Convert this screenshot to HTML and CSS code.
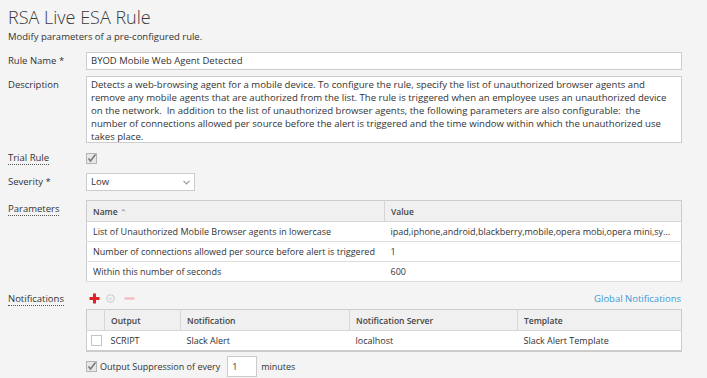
FILE: index.html
```html
<!DOCTYPE html>
<html lang="en">
<head>
    <meta charset="UTF-8">
    <title>RSA Live ESA Rule</title>
    <link rel="stylesheet" href="styles.css">
</head>
<body>
    <div class="page">
        <h1>RSA Live ESA Rule</h1>
        <p class="intro">Modify parameters of a pre-configured rule.</p>

        <div class="row row-name">
            <label>Rule Name *</label>
            <div class="input">BYOD Mobile Web Agent Detected</div>
        </div>

        <div class="row row-desc">
            <label>Description</label>
            <div class="textarea">Detects a web-browsing agent for a mobile device. To configure the rule, specify the list of unauthorized browser agents and remove any mobile agents that are authorized from the list. The rule is triggered when an employee uses an unauthorized device on the network.&nbsp; In addition to the list of unauthorized browser agents, the following parameters are also configurable:&nbsp; the number of connections allowed per source before the alert is triggered and the time window within which the unauthorized use takes place.</div>
        </div>

        <div class="row row-trial">
            <label class="hint">Trial Rule</label>
            <div>
                <svg class="check" width="11" height="11" viewBox="0 0 11 11"><rect x="0.5" y="0.5" width="10" height="10" fill="#e6e6e6" stroke="#b5b5b5"/><path d="M2.5 5.5 L4.5 8 L9.5 1.5" fill="none" stroke="#7a7a7a" stroke-width="1.6"/></svg>
            </div>
        </div>

        <div class="row row-sev">
            <label>Severity *</label>
            <div class="select">Low
                <svg width="7" height="5" viewBox="0 0 7 5"><path d="M0.5 0.8 L3.5 3.8 L6.5 0.8" fill="none" stroke="#999" stroke-width="1.2"/></svg>
            </div>
        </div>

        <div class="row row-params">
            <label class="hint">Parameters</label>
            <table class="grid params">
                <thead>
                    <tr><th class="c-name">Name <span class="sort">&#8963;</span></th><th>Value</th></tr>
                </thead>
                <tbody>
                    <tr><td>List of Unauthorized Mobile Browser agents in lowercase</td><td>ipad,iphone,android,blackberry,mobile,opera mobi,opera mini,sy...</td></tr>
                    <tr><td>Number of connections allowed per source before alert is triggered</td><td>1</td></tr>
                    <tr><td>Within this number of seconds</td><td>600</td></tr>
                </tbody>
            </table>
        </div>

        <div class="row row-notif">
            <label class="hint">Notifications</label>
            <div>
                <div class="toolbar">
                    <svg class="add" width="11" height="11" viewBox="0 0 11 11"><path d="M5.5 0.5 V10.5 M0.5 5.5 H10.5" stroke="#e0212b" stroke-width="3"/></svg>
                    <svg class="menu" width="9" height="9" viewBox="0 0 9 9"><circle cx="4.5" cy="4.5" r="3.8" fill="none" stroke="#c8c8c8"/><path d="M2.8 3.8 L4.5 5.5 L6.2 3.8" fill="none" stroke="#c8c8c8"/></svg>
                    <svg class="remove" width="11" height="11" viewBox="0 0 11 11"><path d="M0.5 5.5 H10.5" stroke="#f2b8bb" stroke-width="2.2"/></svg>
                    <a class="global" href="#">Global Notifications</a>
                </div>
                <table class="grid notif">
                    <thead>
                        <tr><th class="c-chk"></th><th class="c-out">Output</th><th class="c-not">Notification</th><th class="c-srv">Notification Server</th><th>Template</th></tr>
                    </thead>
                    <tbody>
                        <tr>
                            <td class="c-chk"><span class="box"></span></td>
                            <td>SCRIPT</td><td>Slack Alert</td><td>localhost</td><td>Slack Alert Template</td>
                        </tr>
                    </tbody>
                </table>
                <div class="suppress">
                    <svg class="check" width="11" height="11" viewBox="0 0 11 11"><rect x="0.5" y="0.5" width="10" height="10" fill="#e6e6e6" stroke="#b5b5b5"/><path d="M2.5 5.5 L4.5 8 L9.5 1.5" fill="none" stroke="#7a7a7a" stroke-width="1.6"/></svg>
                    <span>Output Suppression of every</span>
                    <div class="input small">1</div>
                    <span>minutes</span>
                </div>
            </div>
        </div>
    </div>
</body>
</html>
```

FILE: styles.css
```css
body {
    margin: 0;
    background: #f4f4f4;
    font-family: "Open Sans", Arial, sans-serif;
    font-size: 9.5px;
    color: #333;
}
.page {
    padding: 5px 25px 0 8px;
}
h1 {
    margin: 0;
    font-size: 18px;
    font-weight: 300;
    line-height: 24px;
    color: #3a3a3a;
}
.intro {
    margin: 1px 0 0 0;
    line-height: 14px;
}
.row {
    display: grid;
    grid-template-columns: 78px 1fr;
}
.row label {
    line-height: 17px;
}
.row label.hint {
    justify-self: start;
    border-bottom: 1px dotted #555;
    line-height: 12px;
}
.input, .textarea, .select {
    background: #fff;
    border: 1px solid #ccc;
    box-sizing: border-box;
    padding: 0 4px;
}
.input {
    height: 18px;
    line-height: 16px;
}
.row-name {
    margin-top: 8px;
}
.row-desc {
    margin-top: 6px;
}
.textarea {
    height: 67px;
    line-height: 13px;
    padding: 1px 8px 1px 4px;
    font-size: 9.6px;
}
.row-trial {
    margin-top: 9px;
    height: 11px;
    align-items: center;
}
.check {
    display: block;
}
.row-sev {
    margin-top: 10px;
}
.select {
    width: 109px;
    height: 18px;
    line-height: 16px;
    display: flex;
    justify-content: space-between;
    align-items: center;
}
.row-params {
    margin-top: 9px;
}
.row-params label {
    margin-top: 3px;
    align-self: start;
}
.grid {
    border-collapse: collapse;
    table-layout: fixed;
    width: 100%;
    background: #fff;
    border: 1px solid #ccc;
}
.grid th {
    background: #f0f0f0;
    height: 20px;
    text-align: left;
    font-weight: 600;
    font-size: 8.5px;
    color: #444;
    padding: 0 6px;
    border-left: 1px solid #d6d6d6;
    border-bottom: 1px solid #d6d6d6;
}
.grid th:first-child {
    border-left: none;
}
.grid td {
    height: 19px;
    padding: 0 6px;
    border-bottom: 1px solid #ddd;
    white-space: nowrap;
    overflow: hidden;
    font-size: 9px;
}
.params .c-name {
    width: 285px;
}
.sort {
    color: #aaa;
    font-size: 8px;
}
.row-notif {
    margin-top: 8px;
}
.row-notif label {
    align-self: start;
    margin-top: 3px;
}
.toolbar {
    display: flex;
    align-items: center;
    height: 17px;
    padding-left: 3px;
    margin-bottom: 2px;
}
.toolbar .menu {
    margin-left: 6px;
}
.toolbar .remove {
    margin-left: 9px;
}
.global {
    margin-left: auto;
    color: #3d9bd6;
    text-decoration: none;
    font-size: 9.5px;
    padding-right: 1px;
}
.notif .c-chk {
    width: 18px;
    padding: 0 0 0 4px;
    box-sizing: border-box;
}
.notif .c-out {
    width: 63px;
}
.notif .c-not {
    width: 156px;
}
.notif .c-srv {
    width: 155px;
}
.notif tbody tr td {
    border-bottom: 2px solid #ccc;
}
.box {
    display: block;
    width: 9px;
    height: 9px;
    border: 1px solid #c4c4c4;
    background: #fff;
}
.suppress {
    display: flex;
    align-items: center;
    margin-top: 4px;
    gap: 3px;
    font-size: 9px;
}
.suppress .input.small {
    width: 30px;
    height: 21px;
    line-height: 20px;
    margin: 0 1px 0 4px;
}
```
